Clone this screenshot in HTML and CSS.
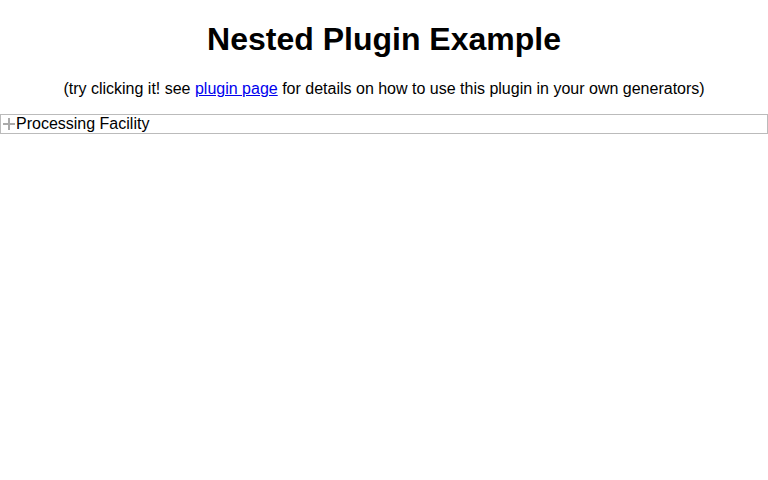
FILE: index.html
```html
<!DOCTYPE html>
<html>
<head>
<meta charset="utf-8">
<title>Nested Plugin Example</title>
<link rel="stylesheet" href="styles.css">
</head>
<body>
<h1 class="title">Nested Plugin Example</h1>
<p class="intro">(try clicking it! see <a href="#">plugin page</a> for details on how to use this plugin in your own generators)</p>
<div class="node">
  <svg class="plus" width="12" height="12" viewBox="0 0 12 12"><path d="M0 6H12M6 0V12" stroke="#aaa" stroke-width="2" fill="none"/></svg>
  <span class="label">Processing Facility</span>
</div>
</body>
</html>
```
FILE: styles.css
```css
body {
  margin: 0;
  font-family: "Liberation Sans", Arial, sans-serif;
  background: #fff;
  color: #000;
}
.title {
  font-size: 32px;
  font-weight: bold;
  text-align: center;
  margin: 21.44px 0;
}
.intro {
  font-size: 16px;
  text-align: center;
  margin: 22px 0 16px;
}
.intro a {
  color: #0000ee;
}
.node {
  border: 1px solid #bbb;
  display: flex;
  align-items: center;
  height: 18px;
  font-size: 16px;
  line-height: 18px;
}
.plus {
  margin: 0 1px 0 2px;
}
.label {
  white-space: nowrap;
}
```
